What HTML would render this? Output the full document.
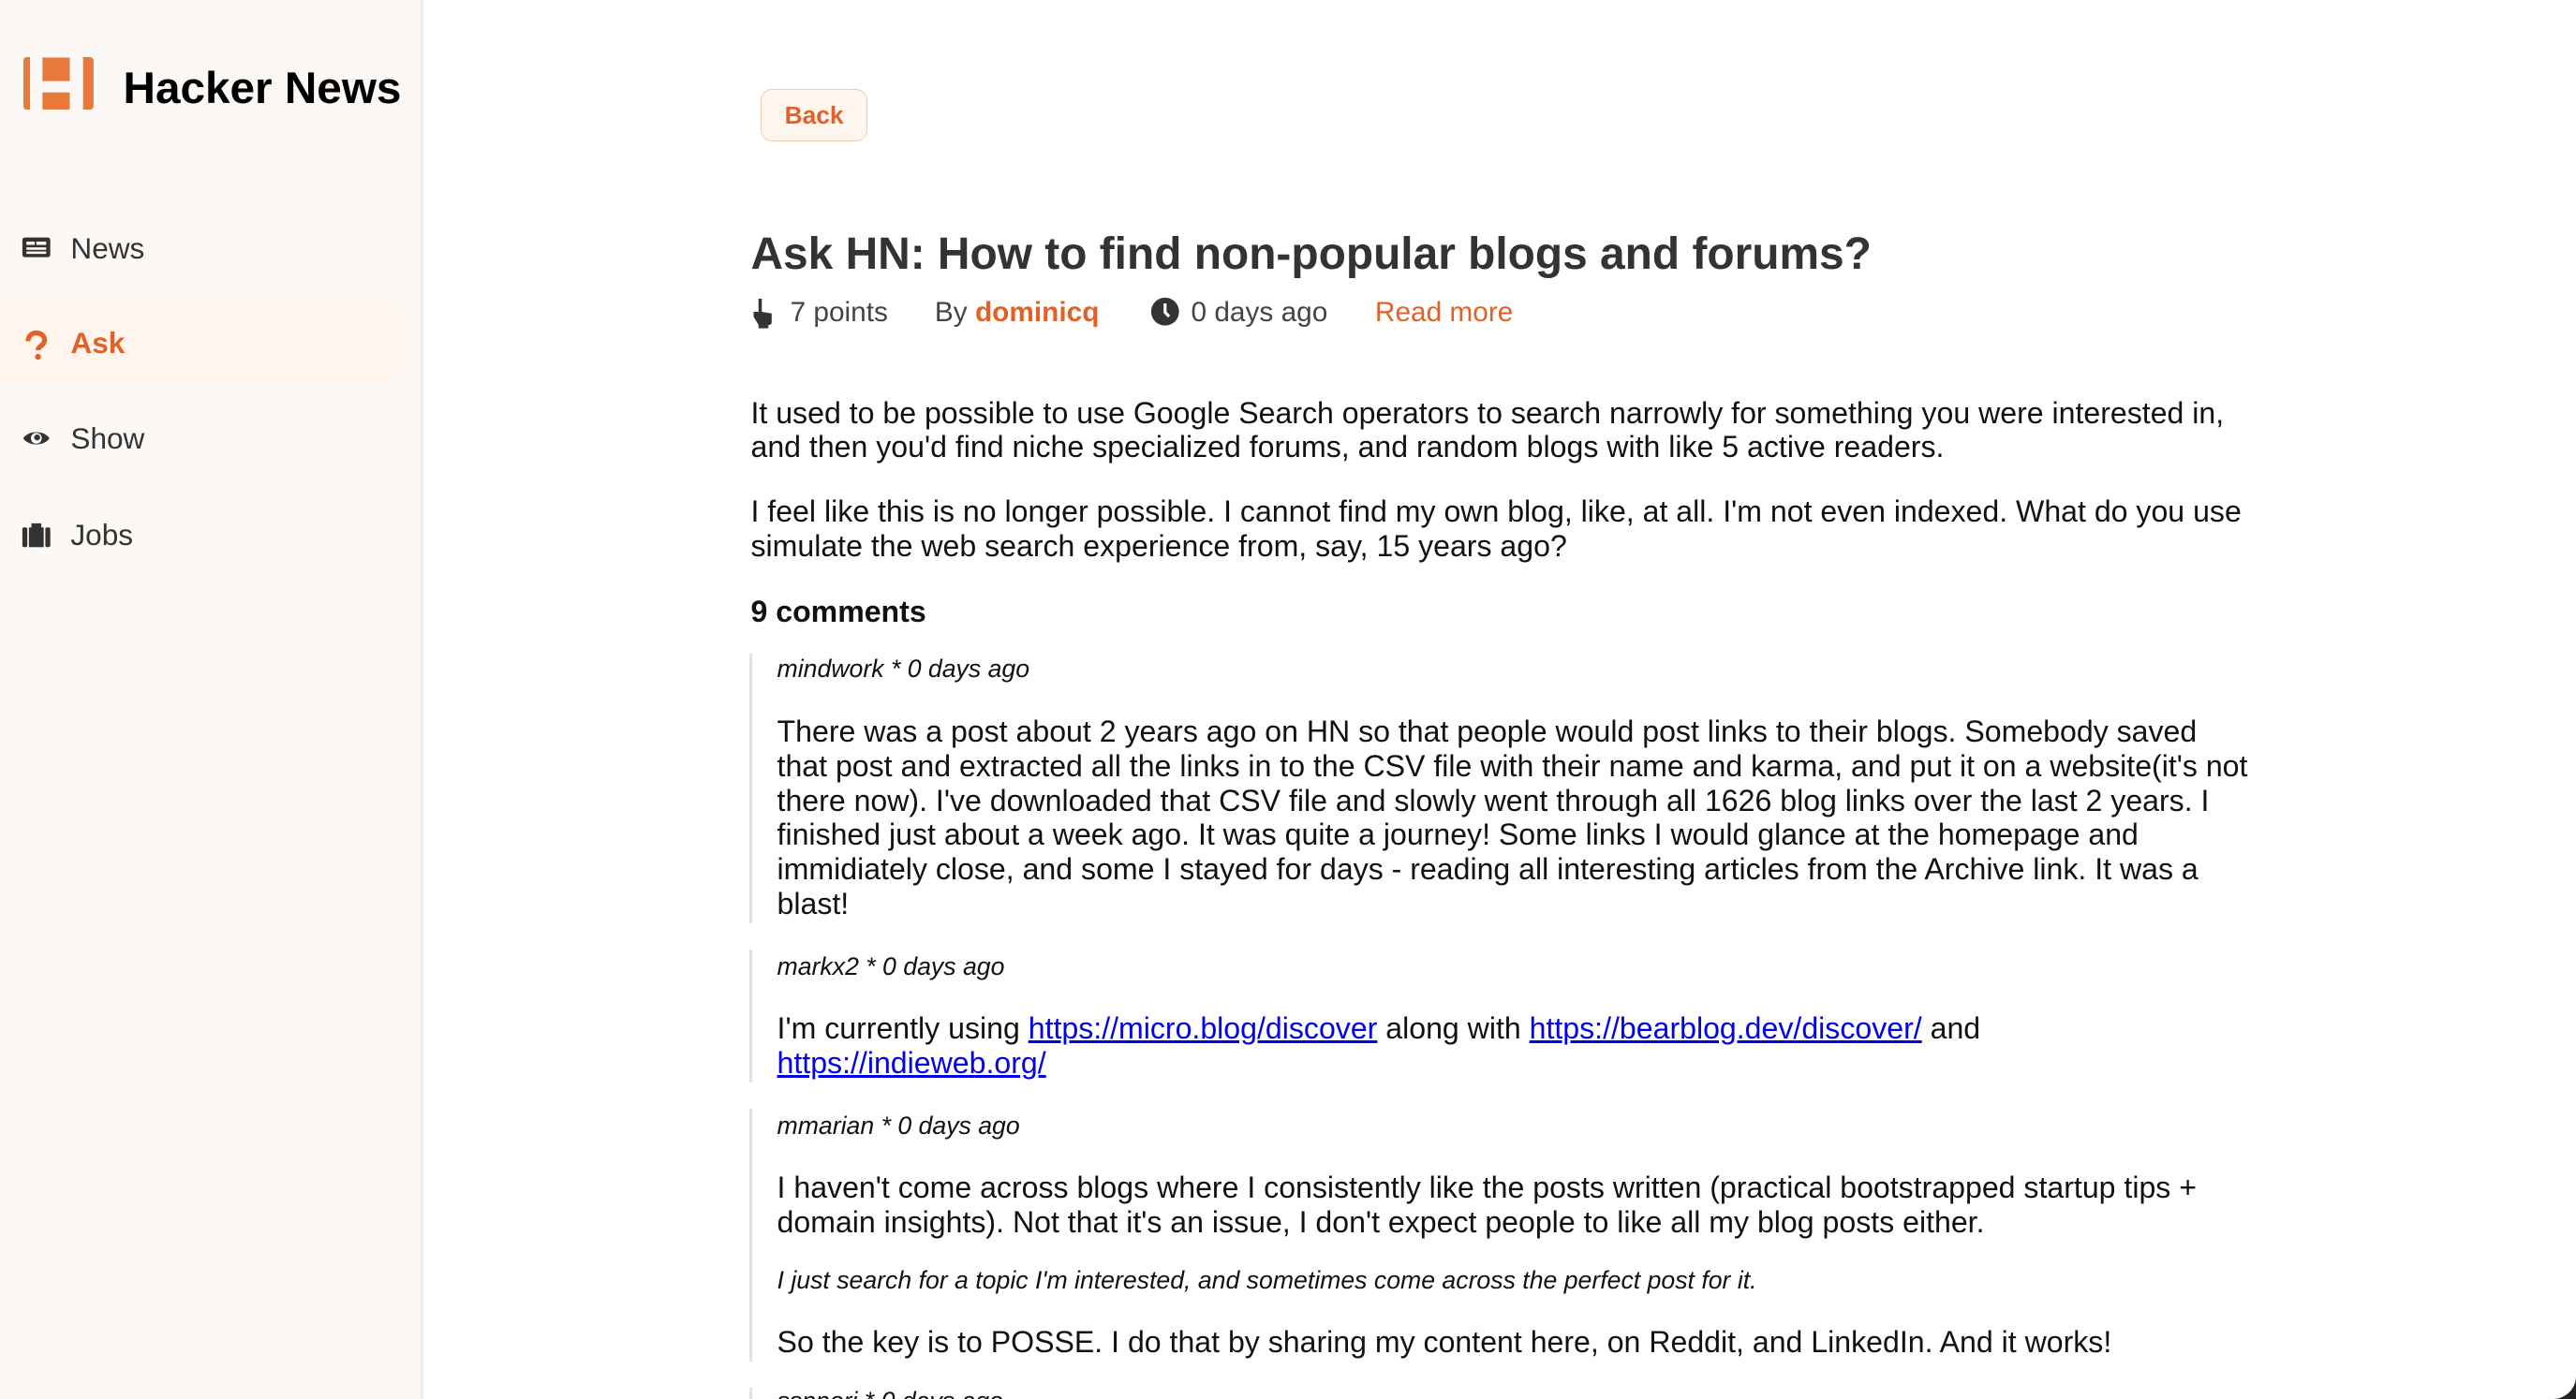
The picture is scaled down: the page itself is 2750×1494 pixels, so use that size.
<!DOCTYPE html>
<html><head><meta charset="utf-8"><style>
html,body{margin:0;padding:0;}
body{width:2750px;height:1494px;overflow:hidden;background:#fff;position:relative;}
#w{zoom:1.7538;width:1568px;height:852px;position:relative;overflow:hidden;font-family:"Liberation Sans",Arial,sans-serif;}
.a{position:absolute;white-space:nowrap;}
.sb{position:absolute;left:0;top:0;width:256px;height:852px;background:#fcf8f5;border-right:2px solid #eeeae7;}
.nav{position:absolute;left:13px;font-size:18px;color:#333;line-height:22px;}
.nav svg{position:absolute;left:0;top:3px;}
.nav span{position:absolute;left:30px;top:0;}
.p{position:absolute;left:457px;font-size:18.3px;line-height:21px;color:#111;white-space:nowrap;}
.c{left:473px;}
.m{font-style:italic;font-size:15.2px;color:#111;}
.bar{position:absolute;left:456px;width:2px;background:#e2e2e2;}
a{color:#0000ee;text-decoration:underline;}
</style></head><body><div id="w">
<div class="sb"></div>
<svg class="a" style="left:14px;top:35px" width="44" height="32" viewBox="0 0 44 32"><path d="M2 0H4V32H2A2 2 0 0 1 0 30V2A2 2 0 0 1 2 0Z" fill="#e8793a"/><path d="M36.3 0H40.5A2.2 2.2 0 0 1 42.7 2.2V29.8A2.2 2.2 0 0 1 40.5 32H36.3Z" fill="#e8793a"/><rect x="11.6" y="0.3" width="16.6" height="14.3" fill="#e8793a"/><rect x="11.6" y="21.5" width="16.6" height="10.5" fill="#e8793a"/></svg>
<div class="a" style="left:75px;top:38px;font-size:27.2px;font-weight:bold;color:#000;">Hacker News</div>
<div class="nav" style="top:140px"><svg width="18" height="16" viewBox="0 0 18 16"><rect x="0.5" y="1.5" width="17" height="12" rx="1.5" fill="#333"/><rect x="3" y="4" width="5" height="2" fill="#fcf8f5"/><rect x="9" y="4" width="6" height="2" fill="#fcf8f5"/><rect x="3" y="7.5" width="12" height="1.5" fill="#fcf8f5"/><rect x="3" y="10" width="12" height="1.5" fill="#fcf8f5"/></svg><span>News</span></div>
<div class="a" style="left:0;top:185px;width:245px;height:49px;background:#fff5ec;border-radius:0 8px 8px 0"></div>
<div class="nav" style="top:198px;color:#e0622a;font-weight:bold"><svg width="18" height="18" viewBox="0 0 18 18"><path d="M4 6.5C4 3 6.5 1.5 9 1.5s5 1.5 5 4.5c0 3-4 3.5-4 6" stroke="#e0622a" stroke-width="3" fill="none"/><circle cx="10" cy="16" r="1.8" fill="#e0622a"/></svg><span>Ask</span></div>
<div class="nav" style="top:256px"><svg width="18" height="16" viewBox="0 0 18 16"><path d="M1 8C4 3 14 3 17 8C14 13 4 13 1 8Z" fill="#333"/><circle cx="9" cy="8" r="3.3" fill="#fcf8f5"/><circle cx="9.5" cy="7.5" r="1.8" fill="#333"/></svg><span>Show</span></div>
<div class="nav" style="top:315px"><svg width="18" height="16" viewBox="0 0 18 16"><rect x="0.5" y="3" width="3" height="12" rx="1" fill="#333"/><rect x="14.5" y="3" width="3" height="12" rx="1" fill="#333"/><rect x="4.5" y="3" width="9" height="12" fill="#333"/><rect x="6" y="0.5" width="6" height="3" fill="#333"/></svg><span>Jobs</span></div>

<div class="a" style="left:463px;top:54px;width:64px;height:31px;border:1px solid #f4c9a8;background:#fff6ee;border-radius:7px;color:#e0622a;font-weight:bold;font-size:15px;line-height:31px;text-align:center">Back</div>
<div class="a" style="left:457px;top:139px;font-size:27.3px;font-weight:bold;color:#333">Ask HN: How to find non-popular blogs and forums?</div>
<div class="a" style="left:457px;top:180px;font-size:17px;color:#444;line-height:21px">
<svg style="position:absolute;left:0;top:2px" width="16" height="18" viewBox="0 0 16 18"><path d="M5 0h2v8l6 1v6l-1 1H5L2 11V8h3z" fill="#333"/><rect x="5" y="16" width="6" height="2" fill="#333"/></svg>
<span style="position:absolute;left:24px">7 points</span>
<span style="position:absolute;left:112px">By <b style="color:#e0622a">dominicq</b></span>
<svg style="position:absolute;left:243px;top:1px" width="18" height="18" viewBox="0 0 18 18"><circle cx="9" cy="9" r="8.5" fill="#333"/><path d="M9 4v5.5l2.5 2.5" stroke="#fff" stroke-width="1.8" fill="none"/></svg>
<span style="position:absolute;left:268px">0 days ago</span>
<span style="position:absolute;left:380px;color:#e0622a">Read more</span>
</div>

<div class="p" style="top:241px">It used to be possible to use Google Search operators to search narrowly for something you were interested in,<br>and then you'd find niche specialized forums, and random blogs with like 5 active readers.</div>
<div class="p" style="top:301px">I feel like this is no longer possible. I cannot find my own blog, like, at all. I'm not even indexed. What do you use<br>simulate the web search experience from, say, 15 years ago?</div>
<div class="p" style="top:362px;font-weight:bold">9 comments</div>

<div class="bar" style="top:398px;height:164px"></div>
<div class="p c m" style="top:397px">mindwork * 0 days ago</div>
<div class="p c" style="top:435px">There was a post about 2 years ago on HN so that people would post links to their blogs. Somebody saved<br>that post and extracted all the links in to the CSV file with their name and karma, and put it on a website(it's not<br>there now). I've downloaded that CSV file and slowly went through all 1626 blog links over the last 2 years. I<br>finished just about a week ago. It was quite a journey! Some links I would glance at the homepage and<br>immidiately close, and some I stayed for days - reading all interesting articles from the Archive link. It was a<br>blast!</div>

<div class="bar" style="top:578px;height:81px"></div>
<div class="p c m" style="top:578px">markx2 * 0 days ago</div>
<div class="p c" style="top:616px">I'm currently using <a>https://micro.blog/discover</a> along with <a>https://bearblog.dev/discover/</a> and<br><a>https://indieweb.org/</a></div>

<div class="bar" style="top:675px;height:154px"></div>
<div class="p c m" style="top:675px">mmarian * 0 days ago</div>
<div class="p c" style="top:713px">I haven't come across blogs where I consistently like the posts written (practical bootstrapped startup tips +<br>domain insights). Not that it's an issue, I don't expect people to like all my blog posts either.</div>
<div class="p c m" style="top:769px">I just search for a topic I'm interested, and sometimes come across the perfect post for it.</div>
<div class="p c" style="top:807px">So the key is to POSSE. I do that by sharing my content here, on Reddit, and LinkedIn. And it works!</div>

<div class="bar" style="top:845px;height:20px"></div>
<div class="p c m" style="top:843px">ssnnori * 0 days ago</div>

<div class="a" style="right:0;bottom:0;width:14px;height:14px;background:#222"></div>
<div class="a" style="right:0;bottom:0;width:28px;height:28px;background:#fff;border-radius:0 0 14px 0"></div>
</div></body></html>
